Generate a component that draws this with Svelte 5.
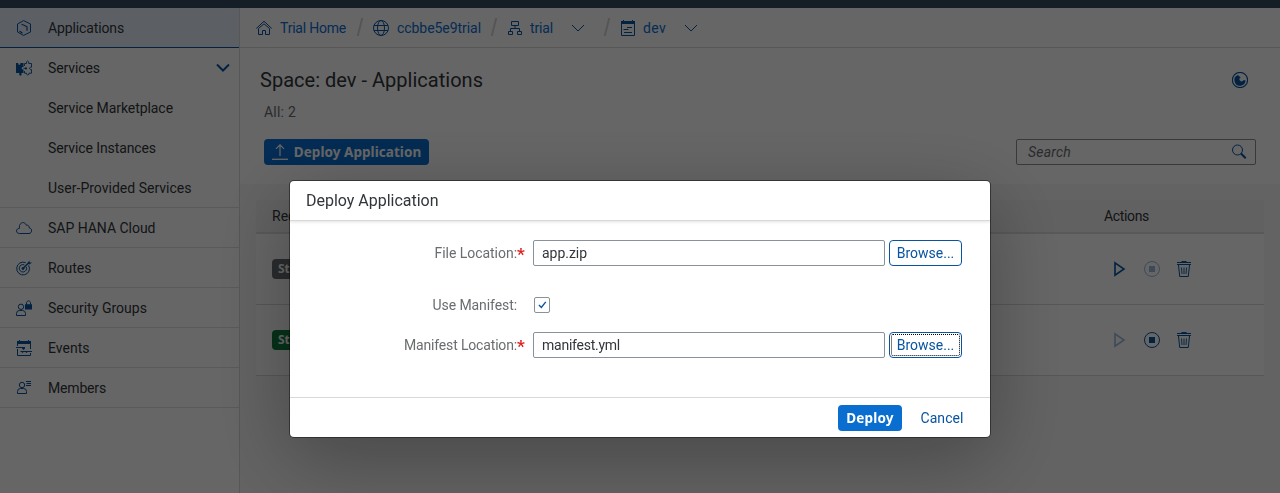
<script>
  const nav = [
    { icon: 'product', label: 'Applications', w: 76, selected: true },
    {
      icon: 'puzzle', label: 'Services', w: 52, open: true,
      children: [
        { label: 'Service Marketplace', w: 125 },
        { label: 'Service Instances', w: 108 },
        { label: 'User-Provided Services', w: 143.5 }
      ]
    },
    { icon: 'cloud', label: 'SAP HANA Cloud', w: 107.5 },
    { icon: 'target', label: 'Routes', w: 43.5 },
    { icon: 'lock', label: 'Security Groups', w: 99 },
    { icon: 'events', label: 'Events', w: 41.5 },
    { icon: 'members', label: 'Members', w: 58 }
  ];
  const rows = [
    { status: 'Stopped', tone: 'grey', canStart: true },
    { status: 'Started', tone: 'green', canStart: false }
  ];
  // Spreads letters evenly so that a label takes the given width.
  function fit(node, width) {
    const range = document.createRange();
    range.selectNodeContents(node);
    const natural = range.getBoundingClientRect().width;
    node.style.letterSpacing = (width - natural) / node.textContent.length + 'px';
  }
</script>

{#snippet icon(name)}
  <svg class="icon" width="16" height="16" viewBox="0 0 16 16" fill="none" stroke="currentColor">
    {#if name === 'product'}
      <path d="M7.500 .6 14.500 4v8L7.500 15.400 1.500 12V4z" />
      <path d="M5.500 4.200 8 5.200 11 6.800v4M3.500 11l3 2.300" stroke-width="1.200" />
    {:else if name === 'puzzle'}
      <path d="M0 3h2.300v1.200q1 1 2 0V3H7.500v4.200q-1.800-.4-1.800 1T7.500 9.500V13H5.500v2q-1 1.600-2.200 0v-2H0z" fill="currentColor" stroke="none" />
      <path d="M8.500 6V3.500h2V1.800q1-1.800 2.200 0v1.700h2.800v3.700h-1.200q-1.600 1 0 2.300h1.200v3.700h-2.500v1q-1.200 1.800-2.500 0v-1h-2V11" stroke-width=".9" />
      <path d="M7.500 8.400H10" stroke-width=".9" /><circle cx="10" cy="8.400" r="1.100" fill="currentColor" stroke="none" />
    {:else if name === 'cloud'}
      <path d="M3.500 13.500c-4 0-4-5 0-5.200C2.500 2 9 .8 10.200 5.200c2-.3 3.300.8 3 2.700C16.800 8.500 16 13.500 13 13.500z" />
    {:else if name === 'target'}
      <path d="M12.600 5.300a6.400 6.400 0 1 1-2.900-2.600M10.400 7a3.700 3.700 0 1 1-2-2.100" />
      <circle cx="7" cy="8.500" r="1" fill="currentColor" />
      <path d="M7 8.500 13 2.500" stroke-width="1.400" /><path d="M11.500 3 13.500.5v2H16L13.500 4.500z" fill="currentColor" stroke="none" />
    {:else if name === 'lock'}
      <circle cx="5" cy="6.800" r="2.700" /><path d="M.5 15.500v-2q0-3 3-3h3q3 0 3 3v2z" />
      <path d="M9 4.200H16V9.500H9z" fill="currentColor" stroke="none" /><path d="M10.500 4.500v-2q2-3.500 4 0v2" />
    {:else if name === 'events'}
      <path d="M1.500 6V1.500h13V9M1.500 9v6.500h13V13" /><path d="M1 1h2V0h1v1h8V0h1v1h2v3H1z" fill="currentColor" stroke="none" />
      <path d="M0 7.500h9M4.500 11.500H16" /><path d="M6 7h3v1.500L7.500 10 6 8.500zM5 11.500h3L6.500 13zM9 11.500h3L10.500 13z" fill="currentColor" stroke="none" />
    {:else if name === 'members'}
      <circle cx="6" cy="5" r="2.700" /><path d="M1.500 13.500v-2q0-3 3-3h3q3 0 3 3v2zM10 1.500h5M10.500 3.500H15M10 5.500h5" />
    {:else if name === 'home'}
      <path d="M.3 8.500 8 1.200l7.700 7.300M2.500 8.500v6h4v-4h3v4h4v-6L8 3.800z" />
    {:else if name === 'globe'}
      <circle cx="8" cy="8" r="7.500" /><ellipse cx="8" cy="8" rx="3.500" ry="7.500" /><path d="M1 5.500h14M1 10.500h14" />
    {:else if name === 'tree'}
      <path d="M4.500 1.500h7v4h-7zM1.500 11.500h4v3h-4zM10.500 11.500h4v3h-4zM8 5.500v3M3.500 11.500v-3h9v3" />
    {:else if name === 'space'}
      <path d="M1.500 1.500h13v14h-13z" /><path d="M1 1h2V0h1v1h8V0h1v1h2v3H1z" fill="currentColor" stroke="none" />
      <path d="M7 7.500h5M3.500 9.500h5M4 12.500h8" />
    {:else if name === 'upload'}
      <path d="M8 12V.8M4 4.800 8 .8l4 4" stroke-width="1.200" /><path d="M0 15.300h16" stroke-width="1.300" />
    {:else if name === 'search'}
      <circle cx="6.500" cy="6" r="5" /><path d="M10 9.500 14.700 14.200" stroke-width="2" />
    {:else if name === 'refresh'}
      <circle cx="8" cy="8" r="7.600" stroke-width="1.100" />
      <path d="M5.800 3A5.600 5.600 0 1 0 13.600 8.300H11.500Q10.500 9.800 8.800 9.300 6.800 8.300 7.500 6.300L8.800 5.500z" fill="currentColor" stroke="none" />
    {:else if name === 'play'}
      <path d="M3 1.800 12 8 3 14.200z" stroke-width="1.600" />
    {:else if name === 'stop'}
      <circle cx="8" cy="8" r="7.500" /><path d="M5 5h6v6H5z" fill="currentColor" stroke="none" />
    {:else if name === 'trash'}
      <path d="M2.500 4l1.200 11.500h8.600L13.500 4" /><path d="M1 1h4.500V0h5v1H15v1H1zM1 3h14v1H1z" fill="currentColor" stroke="none" />
      <path d="M5.500 6.500 6 13M8 6.500V13M10.500 6.500 10 13" stroke-width=".9" />
    {/if}
  </svg>
{/snippet}

<div class="page">
  <div class="shell"></div>
  <div class="body">
    <nav>
      {#each nav as item}
        <div class="group" class:selected={item.selected} class:plain={item.open}>
          <div class="item">
            {@render icon(item.icon)}
            <span use:fit={item.w}>{item.label}</span>
            {#if item.open}
              <svg class="chev" width="14" height="10" viewBox="0 0 14 10" fill="none" stroke="currentColor" stroke-width="2"><path d="M1 1.500 7 7.500 13 1.500" /></svg>
            {/if}
          </div>
          {#each item.children ?? [] as child}
            <div class="item child"><span use:fit={child.w}>{child.label}</span></div>
          {/each}
        </div>
      {/each}
    </nav>
    <main>
      <div class="crumbs">
        {@render icon('home')}<span class="c1" use:fit={66}>Trial Home</span><i class="slash s1"></i>
        {@render icon('globe')}<span class="c2" use:fit={84}>ccbbe5e9trial</span><i class="slash s2"></i>
        {@render icon('tree')}<span class="c3" use:fit={23}>trial</span>
        <svg class="down" width="14" height="8" viewBox="0 0 14 8" fill="none" stroke="currentColor"><path d="M1 1 7 7 13 1" /></svg><i class="slash s3"></i>
        {@render icon('space')}<span class="c4" use:fit={23}>dev</span>
        <svg class="down" width="14" height="8" viewBox="0 0 14 8" fill="none" stroke="currentColor"><path d="M1 1 7 7 13 1" /></svg>
      </div>
      <div class="titlebar"><h1><span use:fit={223}>Space: dev - Applications</span></h1>{@render icon('refresh')}</div>
      <div class="count"><span use:fit={32}>All: 2</span></div>
      <div class="toolbar">
        <button class="primary upload">{@render icon('upload')}<span use:fit={127.5}>Deploy Application</span></button>
        <div class="search"><em use:fit={43}>Search</em>{@render icon('search')}</div>
      </div>
      <div class="content">
        <div class="table">
          <div class="thead"><span>Requested State</span><span use:fit={45}>Actions</span></div>
          {#each rows as row}
            <div class="row">
              <div><b class="tag {row.tone}">{row.status}</b></div>
              <div class="actions">
                <span class:off={!row.canStart}>{@render icon('play')}</span>
                <span class:off={row.canStart}>{@render icon('stop')}</span>
                <span>{@render icon('trash')}</span>
              </div>
            </div>
          {/each}
        </div>
      </div>
    </main>
  </div>
</div>

<div class="overlay">
  <div class="dialog">
    <header><span use:fit={132.5}>Deploy Application</span></header>
    <section>
      <div class="field">
        <label for="file"><span use:fit={82.5}>File Location:</span><b>*</b></label>
        <div class="input" id="file"><span use:fit={45}>app.zip</span></div>
        <button class="browse"><span use:fit={57.5}>Browse...</span></button>
      </div>
      <div class="field check">
        <label for="use"><span use:fit={84.5}>Use Manifest:</span><b></b></label>
        <div class="box" id="use"><svg width="9" height="8" viewBox="0 0 10 9" fill="none" stroke="#0854a0" stroke-width="1.600"><path d="M1 4.500 3.700 7.200 8.700 1" /></svg></div>
      </div>
      <div class="field">
        <label for="manifest"><span use:fit={113}>Manifest Location:</span><b>*</b></label>
        <div class="input" id="manifest"><span use:fit={78}>manifest.yml</span></div>
        <button class="browse focus"><span use:fit={57.5}>Browse...</span></button>
      </div>
    </section>
    <footer>
      <button class="primary"><span use:fit={47.5}>Deploy</span></button>
      <button class="link"><span use:fit={43}>Cancel</span></button>
    </footer>
  </div>
</div>

<style>
  :global(body) { overflow: hidden; }
  .page, .overlay { font-family: Roboto, "Noto Sans", sans-serif; font-size: 14px; color: #32363a; box-sizing: border-box; }
  .page *, .overlay * { box-sizing: border-box; }
  .page { height: 493px; display: flex; flex-direction: column; background: #fff; }
  .icon { flex: none; display: block; color: #0854a0; }
  span, em { white-space: nowrap; }
  button { font: inherit; margin: 0; padding: 0; height: 26px; border: 1px solid transparent; border-radius: 4px; display: flex; align-items: center; justify-content: center; background: none; color: #0854a0; }
  .primary { background: #0a6ed1; color: #fff; font-family: "Noto Sans", sans-serif; font-size: 13.5px; line-height: 18px; font-weight: 700; }
  .primary .icon { color: #fff; }
  .shell { height: 8px; flex: none; background: #354a5f; }
  .body { flex: 1; display: flex; min-height: 0; }
  nav { width: 240px; flex: none; border-right: 1px solid #d9d9d9; }
  .group { border-bottom: 1px solid #e0e0e0; }
  .item { height: 39px; display: flex; align-items: center; padding: 1px 8px 0 16px; gap: 16px; }
  .plain .item { height: 40px; padding-top: 0; padding-right: 9px; }
  .plain .item:last-child { height: 39px; padding-top: 1px; }
  .plain .child { padding-left: 48px; }
  .selected { background: #e5f0fa; border-bottom-color: #0854a0; }
  .chev { margin-left: auto; color: #0854a0; }
  main { flex: 1; min-width: 0; display: flex; flex-direction: column; }
  .crumbs { height: 40px; flex: none; border-bottom: 1px solid #d9d9d9; padding: 1px 0 0 16px; display: flex; align-items: center; color: #0a6ed1; }
  .c1, .c2 { margin-left: 8px; }
  .c1 { width: 66px; } .c2 { width: 84px; } .c3, .c4 { width: 23px; }
  .c3, .c4 { margin-left: 7px; }
  .down { margin-left: 18px; color: #0854a0; }
  .slash { width: 2px; height: 18px; background: #d4d4d4; transform: skewX(-14deg); flex: none; }
  .s1 { margin: -3px 12px 0 13px; } .s2 { margin: -3px 12px 0 12px; } .s3 { margin: -3px 12px 0 21px; }
  .titlebar { height: 64px; flex: none; padding: 0 32px 0 20px; display: flex; align-items: center; justify-content: space-between; }
  h1 { font-size: 20px; font-weight: 400; margin: 0; line-height: 24px; }
  .count { height: 27px; flex: none; padding: 0 0 0 24px; line-height: 0; color: #6a6d70; }
  .toolbar { height: 45px; flex: none; padding: 0 24px; display: flex; align-items: flex-start; justify-content: space-between; }
  .upload { width: 165px; gap: 6px; }
  .search { width: 240px; height: 26px; border: 1px solid #89919a; border-radius: 2px; display: flex; align-items: center; justify-content: space-between; padding: 0 8px 0 11px; color: #6a6d70; }
  .content { flex: 1; background: #f7f7f7; padding: 16px 16px 0; }
  .thead { height: 34px; background: #f2f2f2; border-bottom: 2px solid #dedede; display: flex; align-items: center; justify-content: space-between; padding: 0 115px 0 16px; }
  .row { height: 71px; background: #fff; border-bottom: 1px solid #d9d9d9; display: flex; align-items: center; justify-content: space-between; padding: 0 72px 0 16px; }
  .tag { display: block; height: 20px; line-height: 20px; padding: 0 6px; border-radius: 4px; color: #fff; font-family: "Noto Sans", sans-serif; font-size: 12px; }
  .grey { background: #6a6d70; } .green { background: #107e3e; }
  .actions { display: flex; gap: 16px; }
  .off { opacity: .4; }
  .overlay { position: fixed; inset: 0; background: rgba(0, 0, 0, .6); display: flex; justify-content: center; align-items: flex-start; padding-top: 181px; }
  .dialog { width: 700px; height: 256px; background: #fff; border-radius: 4px; display: flex; flex-direction: column; box-shadow: 0 0 0 1px rgba(0, 0, 0, .42), 0 20px 80px 0 rgba(0, 0, 0, .3); }
  header { height: 40px; flex: none; padding-left: 16px; display: flex; align-items: center; font-size: 16px; border-bottom: 1px solid #d9d9d9; box-shadow: 0 1px 3px rgba(0, 0, 0, .12); }
  section { flex: 1; padding-top: 19px; }
  .field { display: flex; align-items: center; height: 26px; }
  .check { margin: 26px 0 14px; }
  label { width: 235px; display: flex; justify-content: flex-end; color: #6a6d70; }
  label b { width: 8px; height: 16px; color: #d22; font-size: 17px; line-height: 18px; font-weight: 700; }
  .input { width: 352px; height: 26px; border: 1px solid #89919a; border-radius: 2px; margin: 0 4px 0 8px; padding-left: 8px; display: flex; align-items: center; }
  .browse { width: 73px; border-color: #0854a0; }
  .focus { outline: 1px dotted #000; outline-offset: -3px; }
  .box { width: 16px; height: 16px; border: 1px solid #89919a; border-radius: 2px; margin-left: 9px; display: flex; align-items: center; justify-content: center; }
  footer { height: 40px; flex: none; border-top: 1px solid #d9d9d9; padding-right: 18px; display: flex; align-items: center; justify-content: flex-end; gap: 10px; }
  footer .primary { width: 64px; }
  footer .link { width: 60px; }
</style>
